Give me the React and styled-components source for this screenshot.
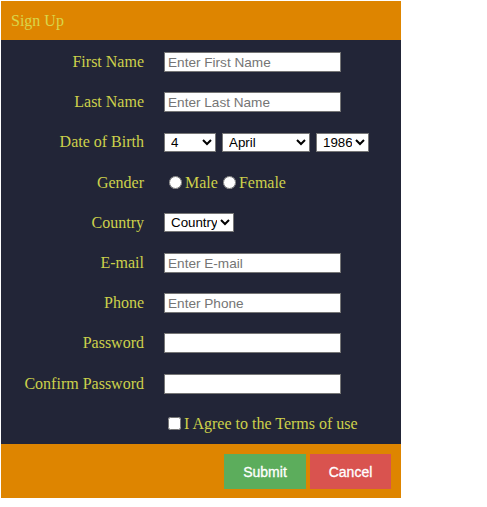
import React from "react";
import styled, { createGlobalStyle } from "styled-components";

const Global = createGlobalStyle`
  html, body { margin: 0; padding: 0; background: #ffffff; }
  body { font-family: "Liberation Serif", "Times New Roman", serif; }
`;

const Card = styled.div`
  width: 400px;
  margin: 1px 0 0 1px;
  display: flex;
  flex-direction: column;
`;

const Header = styled.div`
  height: 39px;
  background: #de8500;
  color: #d9d64a;
  font-size: 16px;
  display: flex;
  align-items: center;
  padding-left: 10px;
`;

const Body = styled.div`
  background: #222537;
  height: 404px;
  box-sizing: border-box;
  padding-top: 2px;
  display: grid;
  grid-template-columns: 143px 1fr;
  grid-auto-rows: 40.2px;
  column-gap: 20px;
  color: #cdd14b;
  font-size: 16px;
`;

const Label = styled.div`
  text-align: right;
  display: flex;
  align-items: center;
  justify-content: flex-end;
`;

const Field = styled.div`
  display: flex;
  align-items: center;
  gap: ${(p) => p.$gap || 0}px;
`;

const TextInput = styled.input`
  box-sizing: border-box;
  width: 177px;
  height: 20px;
  border: 1px solid #767676;
  padding: 1px 3px;
  font-family: "Liberation Sans", Arial, sans-serif;
  font-size: 13.6px;
  background: #fff;
  color: #000;
  outline: none;
  &::placeholder { color: #757575; }
`;

const Select = styled.select`
  box-sizing: border-box;
  width: ${(p) => p.$w}px;
  height: 19px;
  font-family: "Liberation Sans", Arial, sans-serif;
  font-size: 13.33px;
  border: 1px solid #767676;
  border-radius: 0;
  background: #fff;
  color: #000;
  padding: 0 0 0 2px;
`;

const Choice = styled.label`
  display: inline-flex;
  align-items: center;
  color: #cdd14b;
  font-size: 16px;
  input { margin: ${(p) => p.$m}; width: 13px; height: 13px; }
`;

const Footer = styled.div`
  background: #de8500;
  height: 54px;
  box-sizing: border-box;
  padding: 10px 10px 9px;
  display: flex;
  justify-content: flex-end;
  align-items: flex-start;
  gap: 4px;
`;

const Button = styled.button`
  width: ${(p) => p.$w}px;
  height: 35px;
  border: none;
  border-radius: 0;
  background: ${(p) => p.$bg};
  color: #ffffff;
  font-family: "Liberation Sans", Arial, sans-serif;
  font-size: 14px;
  font-weight: normal;
  -webkit-text-stroke: 0.3px #ffffff;
  cursor: pointer;
`;

const months = ["January","February","March","April","May","June","July","August","September","October","November","December"];

export default function App() {
  const days = Array.from({ length: 31 }, (_, i) => i + 1);
  const years = Array.from({ length: 60 }, (_, i) => 1960 + i);
  return (
    <>
      <Global />
      <Card>
        <Header>Sign Up</Header>
        <Body>
          <Label>First Name</Label>
          <Field><TextInput placeholder="Enter First Name" /></Field>

          <Label>Last Name</Label>
          <Field><TextInput placeholder="Enter Last Name" /></Field>

          <Label>Date of Birth</Label>
          <Field $gap={6}>
            <Select $w={52} defaultValue="4">
              {days.map((d) => <option key={d} value={String(d)}>{d}</option>)}
            </Select>
            <Select $w={88} defaultValue="April">
              {months.map((m) => <option key={m} value={m}>{m}</option>)}
            </Select>
            <Select $w={53} defaultValue="1986">
              {years.map((y) => <option key={y} value={String(y)}>{y}</option>)}
            </Select>
          </Field>

          <Label>Gender</Label>
          <Field>
            <Choice $m="0 3px 0 5px"><input type="radio" name="g" />Male</Choice>
            <Choice $m="0 3px 0 5px"><input type="radio" name="g" />Female</Choice>
          </Field>

          <Label>Country</Label>
          <Field>
            <Select $w={70} defaultValue="Country">
              <option value="Country">Country</option>
              <option value="India">India</option>
              <option value="USA">USA</option>
            </Select>
          </Field>

          <Label>E-mail</Label>
          <Field><TextInput placeholder="Enter E-mail" /></Field>

          <Label>Phone</Label>
          <Field><TextInput placeholder="Enter Phone" /></Field>

          <Label>Password</Label>
          <Field><TextInput type="password" /></Field>

          <Label>Confirm Password</Label>
          <Field><TextInput type="password" /></Field>

          <Label />
          <Field>
            <Choice $m="0 3px 0 4px"><input type="checkbox" />I Agree to the Terms of use</Choice>
          </Field>
        </Body>
        <Footer>
          <Button $w={82} $bg="#5cad5c">Submit</Button>
          <Button $w={81} $bg="#d9534f">Cancel</Button>
        </Footer>
      </Card>
    </>
  );
}
